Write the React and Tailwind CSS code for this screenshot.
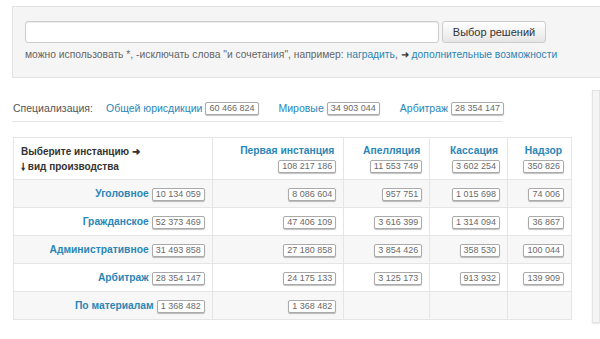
const rows = [
  { name: 'Уголовное', total: '10 134 059', cells: ['8 086 604', '957 751', '1 015 698', '74 006'] },
  { name: 'Гражданское', total: '52 373 469', cells: ['47 406 109', '3 616 399', '1 314 094', '36 867'] },
  { name: 'Административное', total: '31 493 858', cells: ['27 180 858', '3 854 426', '358 530', '100 044'] },
  { name: 'Арбитраж', total: '28 354 147', cells: ['24 175 133', '3 125 173', '913 932', '139 909'] },
  { name: 'По материалам', total: '1 368 482', cells: ['1 368 482', null, null, null] },
];

const heads = [
  { name: 'Первая инстанция', total: '108 217 186', w: 'w-[132px]' },
  { name: 'Апелляция', total: '11 553 749', w: 'w-[86px]' },
  { name: 'Кассация', total: '3 602 254', w: 'w-[78px]' },
  { name: 'Надзор', total: '350 826', w: 'w-[64px]' },
];

function Badge({ children }) {
  return (
    <span className="inline-block h-[13px] px-[3px] leading-[11px] text-[9px] font-normal text-[#6a6a6a] bg-white border border-[#aaa] rounded-[2px] shadow-[0_1px_1px_rgba(0,0,0,0.25)] whitespace-nowrap align-middle">
      {children}
    </span>
  );
}

export default function App() {
  return (
    <div className="w-[600px] h-[339px] overflow-hidden bg-white font-['Liberation_Sans',Arial,sans-serif] text-[11px] text-[#555]">
      <div className="ml-[12px] mt-[6px] w-[600px] h-[72px] bg-[#f5f5f5] border border-[#e3e3e3] pl-[12px] pt-[14px]">
        <div className="flex gap-[3px]">
          <div className="w-[414px] h-[22px] bg-white border border-[#ccc] rounded-[3px] shadow-[inset_0_1px_1px_rgba(0,0,0,0.075)]" />
          <button className="w-[104px] h-[22px] bg-[#f0f0f0] border border-[#ccc] rounded-[3px] text-[11px] text-[#333] bg-gradient-to-b from-white to-[#e6e6e6]">
            Выбор решений
          </button>
        </div>
        <div className="mt-[4px] text-[10.3px] text-[#666] whitespace-nowrap">
          можно использовать *, -исключать слова "и сочетания", например: <span className="text-[#2a86b8]">наградить</span>,{' '}
          <span className="text-[#333]">➜</span> <span className="text-[#2a86b8]">дополнительные возможности</span>
        </div>
      </div>

      <div className="flex mt-[14px]">
        <div className="ml-[13px] w-[559px]">
          <div className="w-[490px] h-[30px] border-b border-[#e5e5e5] flex items-center -ml-[1px] pl-[1px] pt-[4px] text-[10.5px] whitespace-nowrap">
            <span className="text-[#555]">Специализация:</span>
            <span className="ml-[13px] text-[#2a86b8]">Общей юрисдикции</span>
            <span className="ml-[3px]"><Badge>60 466 824</Badge></span>
            <span className="ml-[20px] text-[#2a86b8]">Мировые</span>
            <span className="ml-[3px]"><Badge>34 903 044</Badge></span>
            <span className="ml-[20px] text-[#2a86b8]">Арбитраж</span>
            <span className="ml-[3px]"><Badge>28 354 147</Badge></span>
          </div>

          <table className="mt-[15px] w-[559px] border-collapse">
            <thead>
              <tr className="h-[42px] bg-white">
                <th className="w-[199px] border border-[#e5e5e5] pl-[7px] text-left align-middle font-bold text-[10px] text-[#333] leading-[15px]">
                  <div>Выберите инстанцию ➜</div>
                  <div>🠗 вид производства</div>
                </th>
                {heads.map((h) => (
                  <th key={h.name} className={`${h.w} border border-[#e5e5e5] pr-[7px] text-right align-middle leading-[14px]`}>
                    <div className="font-bold text-[10.3px] text-[#2a86b8] pr-[2px]">{h.name}</div>
                    <div><Badge>{h.total}</Badge></div>
                  </th>
                ))}
              </tr>
            </thead>
            <tbody>
              {rows.map((r, i) => (
                <tr key={r.name} className={i % 2 === 0 ? 'h-[28px] bg-[#f7f7f7]' : 'h-[28px] bg-white'}>
                  <td className="border border-[#e5e5e5] pr-[7px] text-right whitespace-nowrap">
                    <span className="font-bold text-[10.3px] text-[#2a86b8] align-middle">{r.name}</span>{' '}
                    <Badge>{r.total}</Badge>
                  </td>
                  {r.cells.map((c, j) => (
                    <td key={j} className="border border-[#e5e5e5] pr-[7px] text-right">
                      {c && <Badge>{c}</Badge>}
                    </td>
                  ))}
                </tr>
              ))}
            </tbody>
          </table>
        </div>
        <div className="ml-[20px] mt-[-2px] w-[20px] h-[233px] bg-[#f5f5f5] border border-[#e3e3e3] shadow-[0_1px_2px_rgba(0,0,0,0.1)]" />
      </div>
    </div>
  );
}
